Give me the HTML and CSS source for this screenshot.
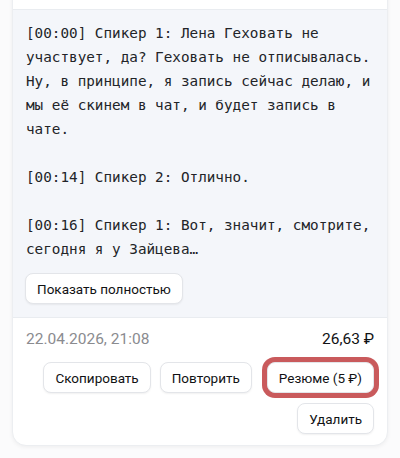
FILE: index.html
```html
<!DOCTYPE html>
<html lang="ru">
<head>
<meta charset="utf-8">
<link rel="stylesheet" href="styles.css">
</head>
<body>
<div class="card">
  <div class="card-top"></div>
  <div class="transcript">
    <div class="transcript-text">[00:00] Спикер 1: Лена Геховать не участвует, да? Геховать не отписывалась. Ну, в принципе, я запись сейчас делаю, и мы её скинем в чат, и будет запись в чате.

[00:14] Спикер 2: Отлично.

[00:16] Спикер 1: Вот, значит, смотрите, сегодня я у Зайцева…</div>
    <button class="btn btn-show">Показать полностью</button>
  </div>
  <div class="footer">
    <div class="meta">
      <span class="date">22.04.2026, 21:08</span>
      <span class="price">26,63 ₽</span>
    </div>
    <div class="actions">
      <button class="btn">Скопировать</button>
      <button class="btn">Повторить</button>
      <button class="btn btn-highlight">Резюме (5 ₽)</button>
      <button class="btn">Удалить</button>
    </div>
  </div>
</div>
</body>
</html>
```
FILE: styles.css
```css
html, body {
  margin: 0;
  padding: 0;
}
body {
  background: #fbfbfc;
  font-family: "Roboto", "Noto Sans", sans-serif;
  color: #1c1c1e;
}
.card {
  margin: -20px 12px 12px;
  background: #ffffff;
  border: 1px solid #eceef1;
  border-radius: 14px;
  box-shadow: 0 1px 4px rgba(0, 0, 0, 0.06);
  overflow: hidden;
}
.card-top {
  height: 28px;
}
.transcript {
  background: #f4f6fa;
  border-top: 1px solid #e9ecf0;
  border-bottom: 1px solid #e9ecf0;
  padding: 11px 13px 13px 12px;
}
.transcript-text {
  font-family: "DejaVu Sans Mono", monospace;
  font-size: 14.3px;
  line-height: 24px;
  color: #222428;
  white-space: pre-wrap;
  padding-left: 1px;
}
.btn {
  font-family: "Roboto", "Noto Sans", sans-serif;
  font-size: 13.5px;
  font-weight: 400;
  color: #111214;
  background: #ffffff;
  border: 1px solid #e3e5e9;
  border-radius: 8px;
  box-shadow: 0 1px 2px rgba(0, 0, 0, 0.06);
  height: 31px;
  padding: 0 11px;
  cursor: pointer;
}
.btn-show {
  margin-top: 12px;
}
.footer {
  padding: 11px 13px 11px;
}
.meta {
  display: flex;
  justify-content: space-between;
  align-items: center;
  font-size: 15.5px;
  line-height: 20px;
}
.date {
  color: #8a8b8f;
}
.price {
  color: #111214;
  font-weight: 400;
}
.actions {
  margin-top: 13px;
  display: flex;
  flex-wrap: wrap;
  justify-content: flex-end;
  column-gap: 9px;
  row-gap: 10px;
}
.btn-highlight {
  box-shadow: 0 0 0 5px #c95a5c;
  border-radius: 8px;
  margin-left: 6px;
}
```
